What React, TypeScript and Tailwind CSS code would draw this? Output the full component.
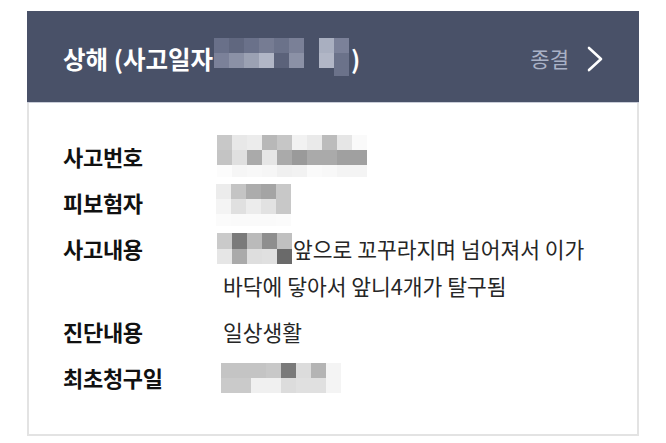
import React from "react";

type Cell = string | null;

interface MosaicProps {
  rows: Cell[][];
  heights?: number[];
  className?: string;
}

// pixelated "blurred" placeholder blocks, 15px cells
function Mosaic({ rows, heights, className }: MosaicProps) {
  return (
    <div className={"flex w-fit flex-col " + (className ?? "")}>
      {rows.map((row, r) => (
        <div key={r} className="flex">
          {row.map((c, i) => (
            <div
              key={i}
              className="w-[15px] shrink-0"
              style={{ height: heights?.[r] ?? 15, backgroundColor: c ?? "transparent" }}
            />
          ))}
        </div>
      ))}
    </div>
  );
}

const headerMosaic: Cell[][] = [
  ["#697089", "#60677f", "#6a718a", "#767c93", "#6b728a", "#7a8097", null, "#a9afc0", "#7b8199"],
  ["#7b8199", "#8b91a6", "#9ba1b3", "#b1b6c6", "#5b627a", "#8b91a6", null, "#b1b6c6", "#6b728a"],
  [null, null, null, null, null, null, null, null, "#6b728a"],
];

const accidentNoMosaic: Cell[][] = [
  ["#c8c8c8", "#e8e8e8", "#ececec", "#b8b8b8", "#c6c6c6", "#f2f2f2", "#eaeaea", "#bcbcbc", "#e6e6e6", "#fafafa"],
  ["#c4c4c4", "#e0e0e0", "#aaaaaa", "#e6e6e6", "#aaaaaa", "#9a9a9a", "#aaaaaa", "#aaaaaa", "#a0a0a0", "#a0a0a0"],
  ["#fcfcfc", "#f6f6f6", "#f8f8f8", "#f6f6f6", "#f0f0f0", "#f2f2f2", "#fafafa", "#f8f8f8", "#f4f4f4", "#f4f4f4"],
];

const insuredMosaic: Cell[][] = [
  ["#ececec", "#c4c4c4", "#acacac", "#a4a4a4", "#c8c8c8"],
  ["#f4f4f4", "#e0e0e0", "#ececec", "#e2e2e2", "#c8c8c8"],
  ["#fbfbfb", "#fafafa", "#fafafa", "#fafafa", "#fbfbfb"],
];

const contentMosaic: Cell[][] = [
  ["#cacaca", "#7a7a7a", "#bababa", "#8e8e8e", "#c0c0c0"],
  ["#e6e6e6", "#aaaaaa", "#dedede", "#e0e0e0", "#6a6a6a"],
];

const claimMosaic: Cell[][] = [
  ["#c4c4c4", "#c4c4c4", "#c4c4c4", "#c8c8c8", "#7a7a7a", "#dcdcdc", "#b4b4b4", "#f4f4f4"],
  ["#cacaca", "#cacaca", "#f0f0f0", "#f0f0f0", "#dcdcdc", "#e0e0e0", "#e0e0e0", "#f4f4f4"],
];

function Row({ label, children }: { label: string; children: React.ReactNode }) {
  return (
    <div className="flex items-start">
      <div className="w-[157px] shrink-0 text-[22px] font-bold leading-[37px] tracking-[-0.3px] text-[#111111]">{label}</div>
      <div className="min-w-0 flex-1 text-[21.5px] leading-[37px] text-[#262626]">{children}</div>
    </div>
  );
}

export default function App() {
  return (
    <div
      className="h-[443px] w-[666px] bg-white pl-[27px] pt-[11px]"
      style={{ fontFamily: '"Noto Sans CJK KR", "Noto Sans", sans-serif' }}
    >
      <div className="w-[612px]">
        <div className="flex h-[92px] items-center justify-between border-b border-[#c9cdd8] bg-[#495168] pl-[36px] pr-[36px] pt-[5px]">
          <div className="flex items-center text-[24.5px] font-bold text-white">
            <span>상해 (사고일자</span>
            <Mosaic rows={headerMosaic} heights={[15, 15, 8]} className="mb-[4px] ml-[1px]" />
            <span className="ml-[2px]">)</span>
          </div>
          <div className="flex items-center gap-[18px]">
            <span className="text-[21px] text-[#aab2c7]">종결</span>
            <svg width="16" height="26" viewBox="0 0 16 26" fill="none">
              <polyline points="2,2 14,13 2,24" stroke="#ffffff" strokeWidth="2.6" strokeLinecap="round" strokeLinejoin="round" />
            </svg>
          </div>
        </div>
        <div className="flex flex-col gap-[9px] border-x-2 border-b-2 border-[#e3e3e3] pb-[34px] pl-[34px] pt-[35px]">
          <Row label="사고번호">
            <div className="h-[37px]">
              <Mosaic rows={accidentNoMosaic} heights={[15, 15, 12]} className="ml-[-3px] mt-[-3px]" />
            </div>
          </Row>
          <Row label="피보험자">
            <div className="h-[37px]">
              <Mosaic rows={insuredMosaic} heights={[15, 15, 12]} className="ml-[-4px]" />
            </div>
          </Row>
          <Row label="사고내용">
            <div className="flex h-[37px] items-center">
              <Mosaic rows={contentMosaic} heights={[16, 15]} className="ml-[-3px] mr-[1px] w-[70px] overflow-hidden" />
              <span>앞으로 꼬꾸라지며 넘어져서 이가</span>
            </div>
            <div className="pl-[3px]">바닥에 닿아서 앞니4개가 탈구됨</div>
          </Row>
          <Row label="진단내용">
            <span className="pl-[3px]">일상생활</span>
          </Row>
          <Row label="최초청구일">
            <div className="h-[37px]">
              <Mosaic rows={claimMosaic} className="ml-[1px] mt-[4px]" />
            </div>
          </Row>
        </div>
      </div>
    </div>
  );
}
